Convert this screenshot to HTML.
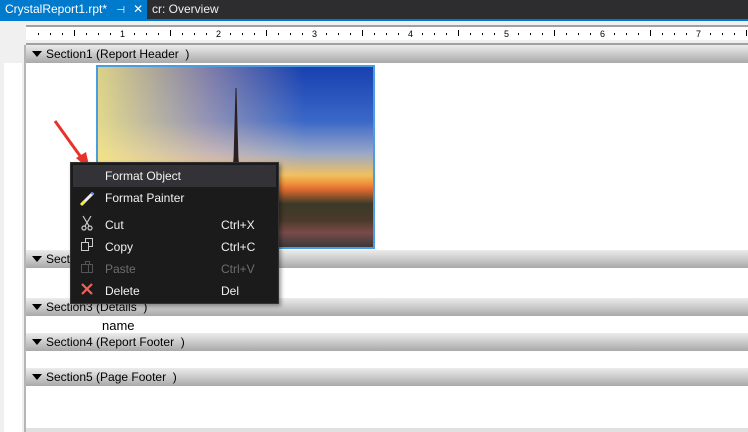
<!DOCTYPE html>
<html><head><style>
*{margin:0;padding:0;box-sizing:border-box}
body{width:748px;height:432px;overflow:hidden;background:#fff;font-family:"Liberation Sans",sans-serif;position:relative}
.a{position:absolute}
.band{position:absolute;left:26px;right:0;height:18px;background:linear-gradient(#ececec,#a9a9a9);font-size:12px;color:#000;line-height:18px;padding-left:20px}
.band:before{content:"";position:absolute;left:6px;top:6px;border-left:5px solid transparent;border-right:5px solid transparent;border-top:6px solid #000}
.mi{position:absolute;left:34px;font-size:12px;color:#f1f1f1}
.sc{position:absolute;left:150px;font-size:12px;color:#f1f1f1}
</style></head><body>
<div class="a" style="left:0;top:0;width:748px;height:19px;background:#2d2d30"></div>
<div class="a" style="left:0;top:0;width:147px;height:19px;background:#007acc;color:#fff;font-size:12px;line-height:19px;padding-left:5px">CrystalReport1.rpt* <span style="font-size:10px;margin-left:6px">⊣</span><span style="margin-left:8px">✕</span></div>
<div class="a" style="left:152px;top:0;color:#f1f1f1;font-size:12px;line-height:19px">cr: Overview</div>
<div class="a" style="left:0;top:19px;width:748px;height:2px;background:#007acc"></div>
<div class="a" style="left:0;top:21px;width:748px;height:24px;background:#f0f0f0"></div>
<div class="a" style="left:26px;top:25px;width:722px;height:2px;background:#a0a0a0"></div>
<div class="a" style="left:26px;top:27px;width:722px;height:13px;background:#fff"></div>
<div class="a" style="left:26px;top:43px;width:722px;height:2px;background:#a0a0a0"></div>
<svg class="a" style="left:0;top:27px" width="748" height="13" font-family="Liberation Sans" font-size="9">
<g fill="#000">
<rect x="38" y="6" width="1" height="2"/><rect x="50" y="6" width="1" height="2"/><rect x="62" y="6" width="1" height="2"/><rect x="86" y="6" width="1" height="2"/><rect x="98" y="6" width="1" height="2"/><rect x="110" y="6" width="1" height="2"/><rect x="134" y="6" width="1" height="2"/><rect x="146" y="6" width="1" height="2"/><rect x="158" y="6" width="1" height="2"/><rect x="182" y="6" width="1" height="2"/><rect x="194" y="6" width="1" height="2"/><rect x="206" y="6" width="1" height="2"/><rect x="230" y="6" width="1" height="2"/><rect x="242" y="6" width="1" height="2"/><rect x="254" y="6" width="1" height="2"/><rect x="278" y="6" width="1" height="2"/><rect x="290" y="6" width="1" height="2"/><rect x="302" y="6" width="1" height="2"/><rect x="326" y="6" width="1" height="2"/><rect x="338" y="6" width="1" height="2"/><rect x="350" y="6" width="1" height="2"/><rect x="374" y="6" width="1" height="2"/><rect x="386" y="6" width="1" height="2"/><rect x="398" y="6" width="1" height="2"/><rect x="422" y="6" width="1" height="2"/><rect x="434" y="6" width="1" height="2"/><rect x="446" y="6" width="1" height="2"/><rect x="470" y="6" width="1" height="2"/><rect x="482" y="6" width="1" height="2"/><rect x="494" y="6" width="1" height="2"/><rect x="518" y="6" width="1" height="2"/><rect x="530" y="6" width="1" height="2"/><rect x="542" y="6" width="1" height="2"/><rect x="566" y="6" width="1" height="2"/><rect x="578" y="6" width="1" height="2"/><rect x="590" y="6" width="1" height="2"/><rect x="614" y="6" width="1" height="2"/><rect x="626" y="6" width="1" height="2"/><rect x="638" y="6" width="1" height="2"/><rect x="662" y="6" width="1" height="2"/><rect x="674" y="6" width="1" height="2"/><rect x="686" y="6" width="1" height="2"/><rect x="710" y="6" width="1" height="2"/><rect x="722" y="6" width="1" height="2"/><rect x="734" y="6" width="1" height="2"/>
<rect x="74" y="3" width="1" height="6"/><rect x="170" y="3" width="1" height="6"/><rect x="266" y="3" width="1" height="6"/><rect x="362" y="3" width="1" height="6"/><rect x="458" y="3" width="1" height="6"/><rect x="554" y="3" width="1" height="6"/><rect x="650" y="3" width="1" height="6"/><rect x="746" y="3" width="1" height="6"/>
<text x="120" y="10">1</text><text x="216" y="10">2</text><text x="312" y="10">3</text><text x="408" y="10">4</text><text x="504" y="10">5</text><text x="600" y="10">6</text><text x="696" y="10">7</text></g>
</svg>
<div class="a" style="left:0;top:45px;width:26px;height:387px;background:#f0f0f0"></div>
<div class="a" style="left:4px;top:63px;width:18px;height:369px;background:#fff"></div>
<div class="a" style="left:24px;top:45px;width:2px;height:387px;background:#b5b5b5"></div>
<div class="band" style="top:45px">Section1 (Report Header&nbsp; )</div>
<div class="band" style="top:250px">Section2 (Page Header&nbsp; )</div>
<div class="band" style="top:298px">Section3 (Details&nbsp; )</div>
<div class="band" style="top:333px">Section4 (Report Footer&nbsp; )</div>
<div class="band" style="top:368px">Section5 (Page Footer&nbsp; )</div>
<div class="a" style="left:26px;top:428px;width:722px;height:4px;background:#e0e0e0"></div>
<div class="a" style="left:102px;top:318px;font-size:13px;color:#000">name</div>
<div class="a" style="left:96px;top:65px;width:279px;height:184px;border:2px solid #4a9de0;background:linear-gradient(180deg,#1840b0 0%,#3a68c8 30%,#9aa8c8 48%,#f0c060 60%,#f09a40 64%,#e06a30 68%,#3a3a28 76%,#4a3a2a 85%,#7a4a4a 92%,#3a3a3a 100%)"></div>
<div class="a" style="left:98px;top:67px;width:275px;height:110px;background:linear-gradient(90deg,rgba(255,235,130,.85),rgba(255,200,160,.45) 40%,rgba(30,60,170,0) 75%)"></div>
<div class="a" style="left:230px;top:88px;width:12px;height:115px;background:#2a2020;clip-path:polygon(46% 0,54% 0,70% 60%,100% 100%,0 100%,30% 60%)"></div>
<svg class="a" style="left:50px;top:118px" width="45" height="55"><path d="M5 3 L33 42" stroke="#e8322a" stroke-width="3"/><path d="M26 40 L40 52 L36 34 Z" fill="#e8322a"/></svg>
<div class="a" style="left:70px;top:162px;width:209px;height:142px;background:#1b1b1c;border:1px solid #333;box-shadow:2px 2px 4px rgba(0,0,0,.4)">
<div class="a" style="left:2px;top:2px;width:203px;height:22px;background:#333337"></div>
<div class="mi" style="top:6px">Format Object</div>
<div class="mi" style="top:28px">Format Painter</div>
<svg class="a" style="left:8px;top:28px" width="16" height="16"><path d="M3 13 L10 6 M7 9 L12 4 L14 2" stroke="#eee" stroke-width="3"/><path d="M2 14 L6 10" stroke="#ee4" stroke-width="3"/><path d="M12 2 L15 3" stroke="#68f" stroke-width="2"/></svg>
<svg class="a" style="left:9px;top:52px" width="14" height="16" fill="none" stroke="#ccc" stroke-width="1.2"><path d="M3 1 L9 11 M11 1 L5 11"/><circle cx="4" cy="13" r="2"/><circle cx="10" cy="13" r="2"/></svg>
<div class="mi" style="top:55px">Cut</div><div class="sc" style="top:55px">Ctrl+X</div>
<svg class="a" style="left:9px;top:74px" width="14" height="16" fill="none" stroke="#ccc"><rect x="1.5" y="5.5" width="7" height="8"/><path d="M5.5 5.5V1.5H12.5V9.5H8.5"/></svg>
<div class="mi" style="top:77px">Copy</div><div class="sc" style="top:77px">Ctrl+C</div>
<svg class="a" style="left:9px;top:96px" width="14" height="16" fill="none" stroke="#555"><rect x="1.5" y="5.5" width="7" height="8"/><path d="M5.5 5.5V2.5H9.5V5.5M8.5 5.5H12.5V13.5H8.5"/></svg>
<div class="mi" style="top:99px;color:#6d6d6d">Paste</div><div class="sc" style="top:99px;color:#6d6d6d">Ctrl+V</div>
<svg class="a" style="left:9px;top:119px" width="14" height="14"><path d="M2 2 L12 12 M12 2 L2 12" stroke="#f0625a" stroke-width="2.2"/></svg>
<div class="mi" style="top:121px">Delete</div><div class="sc" style="top:121px">Del</div>
</div>
</body></html>
